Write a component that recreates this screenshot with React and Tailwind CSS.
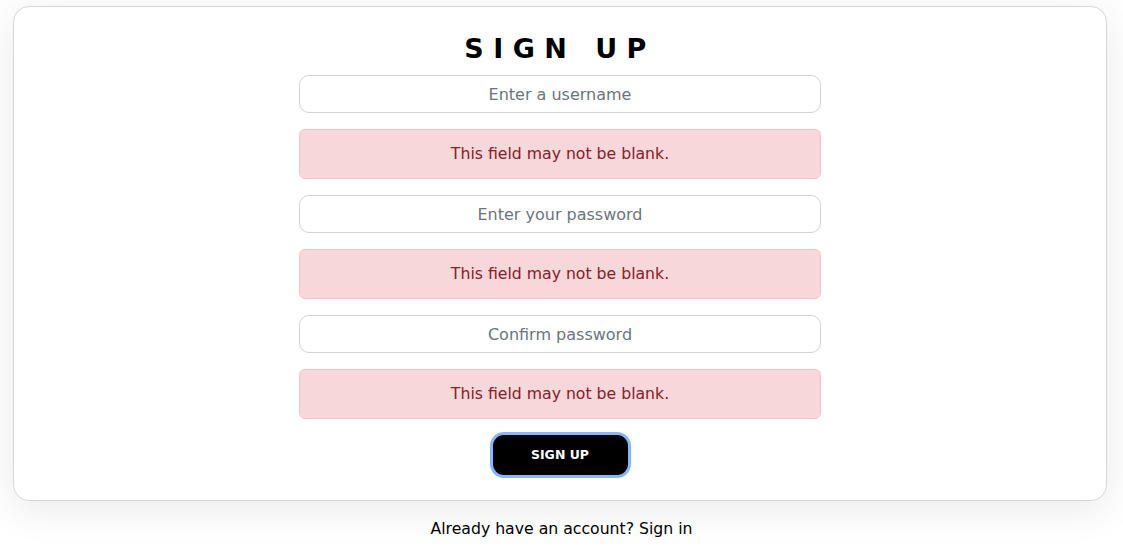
import React from "react";

const font = { fontFamily: '"DejaVu Sans", "Liberation Sans", sans-serif' };

function Field({ placeholder, type = "text" }) {
  return (
    <input
      type={type}
      placeholder={placeholder}
      className="block h-[38px] w-[522px] rounded-[10px] border border-[#ced4da] bg-white text-center text-[16px] text-[#212529] outline-none placeholder:text-[#6c757d]"
    />
  );
}

function Alert() {
  return (
    <div className="flex h-[50px] w-[522px] items-center justify-center rounded-[6px] border border-[#f5c2c7] bg-[#f8d7da] text-[15.7px] text-[#842029]">
      This field may not be blank.
    </div>
  );
}

export default function App() {
  return (
    <div className="min-h-[550px] bg-white px-[13px] pt-[6px] text-[#212529]" style={font}>
      <div className="w-[1094px] rounded-[16px] border border-[#d3d6dd] bg-white pb-[22px] pt-[23px] shadow-[0_8px_40px_rgba(0,0,0,0.09)]">
        <h1 className="h-[38px] text-center text-[27px] font-semibold leading-[38px] tracking-[0.35em] text-black">
          SIGN UP
        </h1>
        <div className="mt-[7px] flex flex-col items-center gap-[16px]">
          <Field placeholder="Enter a username" />
          <Alert />
          <Field placeholder="Enter your password" type="password" />
          <Alert />
          <Field placeholder="Confirm password" type="password" />
          <Alert />
        </div>
        <div className="mt-[13px] flex justify-center">
          <button className="h-[46px] w-[141px] rounded-[14px] border-[3px] border-[#86b7fe] bg-black text-[12.5px] font-bold text-white">
            SIGN UP
          </button>
        </div>
      </div>
      <p className="mt-[16px] text-center text-[15.7px] leading-[24px] text-black">
        Already have an account? Sign in
      </p>
    </div>
  );
}
